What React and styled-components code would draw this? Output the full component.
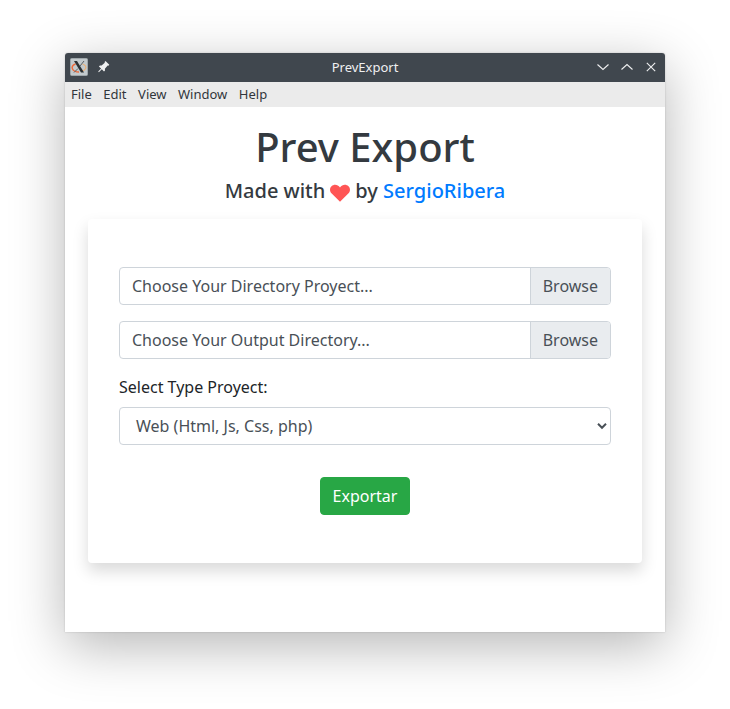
import React from "react";
import styled, { createGlobalStyle } from "styled-components";

const GlobalStyle = createGlobalStyle`
  *, *::before, *::after { box-sizing: border-box; }
  body { margin: 0; background: #fff; font-family: "Noto Sans", sans-serif; font-size: 16px; line-height: 1.5; color: #212529; overflow: hidden; }
`;
const Desktop = styled.div`
  height: 709px;
  padding: 53px 65px 0;
`;
const Window = styled.div`
  width: 600px;
  height: 579px;
  background: #fff;
  border-radius: 3px 3px 0 0;
  box-shadow: 0 0 2px rgba(0,0,0,.2), 0 14px 54px rgba(0,0,0,.29);
`;
const TitleBar = styled.header`
  height: 29px;
  display: grid;
  grid-template-columns: 80px 1fr 80px;
  align-items: center;
  background: #40474e;
  border-radius: 3px 3px 0 0;
  color: #eff0f1;
  font-size: 13px;
`;
const TitleText = styled.span`
  text-align: center;
`;
const LeftIcons = styled.div`
  display: flex;
  align-items: center;
  gap: 7px;
  padding: 0 0 2px 5px;
  svg { display: block; }
`;
const Controls = styled.div`
  display: flex;
  justify-content: flex-end;
  gap: 8px;
  padding: 0 6px 1px 0;
  svg { display: block; }
`;
const MenuBar = styled.nav`
  display: flex;
  gap: 11.5px;
  height: 25px;
  padding-left: 6px;
  background: #ebebeb;
  color: #31363b;
  font-size: 13px;
  line-height: 25px;
`;
const Heading = styled.h1`
  margin: 16px 0 8px;
  font-size: 40px;
  font-weight: 500;
  line-height: 48px;
  text-align: center;
  color: #343a40;
`;
const Subtitle = styled.h5`
  display: flex;
  justify-content: center;
  align-items: center;
  gap: 5px;
  margin: 0 0 16px;
  font-size: 20px;
  font-weight: 500;
  line-height: 24px;
  color: #343a40;
`;
const Heart = styled.svg`
  display: block;
  margin-top: 3px;
`;
const Author = styled.a`
  color: #007bff;
`;
const Card = styled.main`
  width: 554px;
  height: 344px;
  margin: 0 auto;
  padding: 48px 31px 0;
  border-radius: 4px;
  box-shadow: 0 8px 16px rgba(0,0,0,.15);
`;
const FileInput = styled.div`
  display: flex;
  height: 38px;
  margin-bottom: 16px;
  border: 1px solid #ced4da;
  border-radius: 4px;
  overflow: hidden;
  color: #495057;
  line-height: 36px;
`;
const FileText = styled.span`
  flex: 1;
  padding-left: 12px;
`;
const Browse = styled.span`
  padding: 0 12px;
  border-left: 1px solid #ced4da;
  background: #e9ecef;
`;
const Label = styled.label`
  display: block;
  margin-bottom: 8px;
`;
const Select = styled.div`
  display: flex;
  justify-content: space-between;
  align-items: center;
  height: 38px;
  padding: 0 3px 0 16px;
  border: 1px solid #ced4da;
  border-radius: 4px;
  color: #495057;
`;
const Button = styled.button`
  display: block;
  height: 38px;
  margin: 32px auto 0;
  padding: 0 12px;
  border: 1px solid #28a745;
  border-radius: 4px;
  background: #28a745;
  color: #fff;
  font: 16px/36px "Noto Sans", sans-serif;
`;

const FileField = ({ text }) => (
  <FileInput><FileText>{text}</FileText><Browse>Browse</Browse></FileInput>
);
const Control = ({ d }) => (
  <svg width="16" height="16" viewBox="0 0 16 16" fill="none" stroke="#eff0f1" strokeWidth="1.1"><path d={d} /></svg>
);

export default function App() {
  return (
    <Desktop>
      <GlobalStyle />
      <Window>
        <TitleBar>
          <LeftIcons>
            <svg width="18" height="18" viewBox="0 0 18 18">
              <rect x="0.5" y="0.5" width="17" height="17" rx="1" fill="#c3cacd" stroke="#9fa7ab" />
              <path d="M5.500 6C2.500 7 1.500 9 2.500 11s3 3 6.500 3" fill="none" stroke="#ee6b3b" strokeWidth="1.5" />
              <path d="M12.500 6c3 .8 4 3 3 4.800s-2.500 2.200-4 2.400" fill="none" stroke="#e9b078" strokeWidth="1.2" />
              <path d="M4 3h3l7 11.500h-3z" fill="#2b3033" />
              <path d="M14 3 10 8M8 10.500l-4 4" stroke="#596065" />
            </svg>
            <svg width="16" height="16" viewBox="0 0 16 16" fill="#eff0f1">
              <path d="M10.500 2 14.300 5.800l-.9.9-.7-.2-2.800 3.300.1 1.700-1 1-2.200-2.200-2.900 2.900-.7-.7 2.900-2.900L3.900 7.400l1-1 1.700.1 3.200-2.800-.2-.8z" />
            </svg>
          </LeftIcons>
          <TitleText>PrevExport</TitleText>
          <Controls>
            <Control d="m2.500 5.500 5.500 5 5.500-5" />
            <Control d="m2.500 10.500 5.500-5 5.500 5" />
            <Control d="m3.800 3.800 8.400 8.400m0-8.400-8.400 8.400" />
          </Controls>
        </TitleBar>
        <MenuBar>
          {["File", "Edit", "View", "Window", "Help"].map((m) => <span key={m}>{m}</span>)}
        </MenuBar>
        <Heading>Prev Export</Heading>
        <Subtitle>
          <span>Made with</span>
          <Heart width="20" height="20" viewBox="0 0 20 20"><path d="M10 18.700 1.700 10.500C-.5 8.200-.5 5.200 1.500 3.200 4 .8 7.800 1.300 10 4.400 12.200 1.300 16 .8 18.500 3.200c2 2 2 5-.2 7.300z" fill="#ff5555" /></Heart>
          <span>by <Author>SergioRibera</Author></span>
        </Subtitle>
        <Card>
          <FileField text="Choose Your Directory Proyect..." />
          <FileField text="Choose Your Output Directory..." />
          <Label>Select Type Proyect:</Label>
          <Select>
            <span>Web (Html, Js, Css, php)</span>
            <svg width="10" height="8" viewBox="0 0 10 8" fill="none" stroke="#495057" strokeWidth="2"><path d="m1 1.800 4 4 4-4" /></svg>
          </Select>
          <Button>Exportar</Button>
        </Card>
      </Window>
    </Desktop>
  );
}
